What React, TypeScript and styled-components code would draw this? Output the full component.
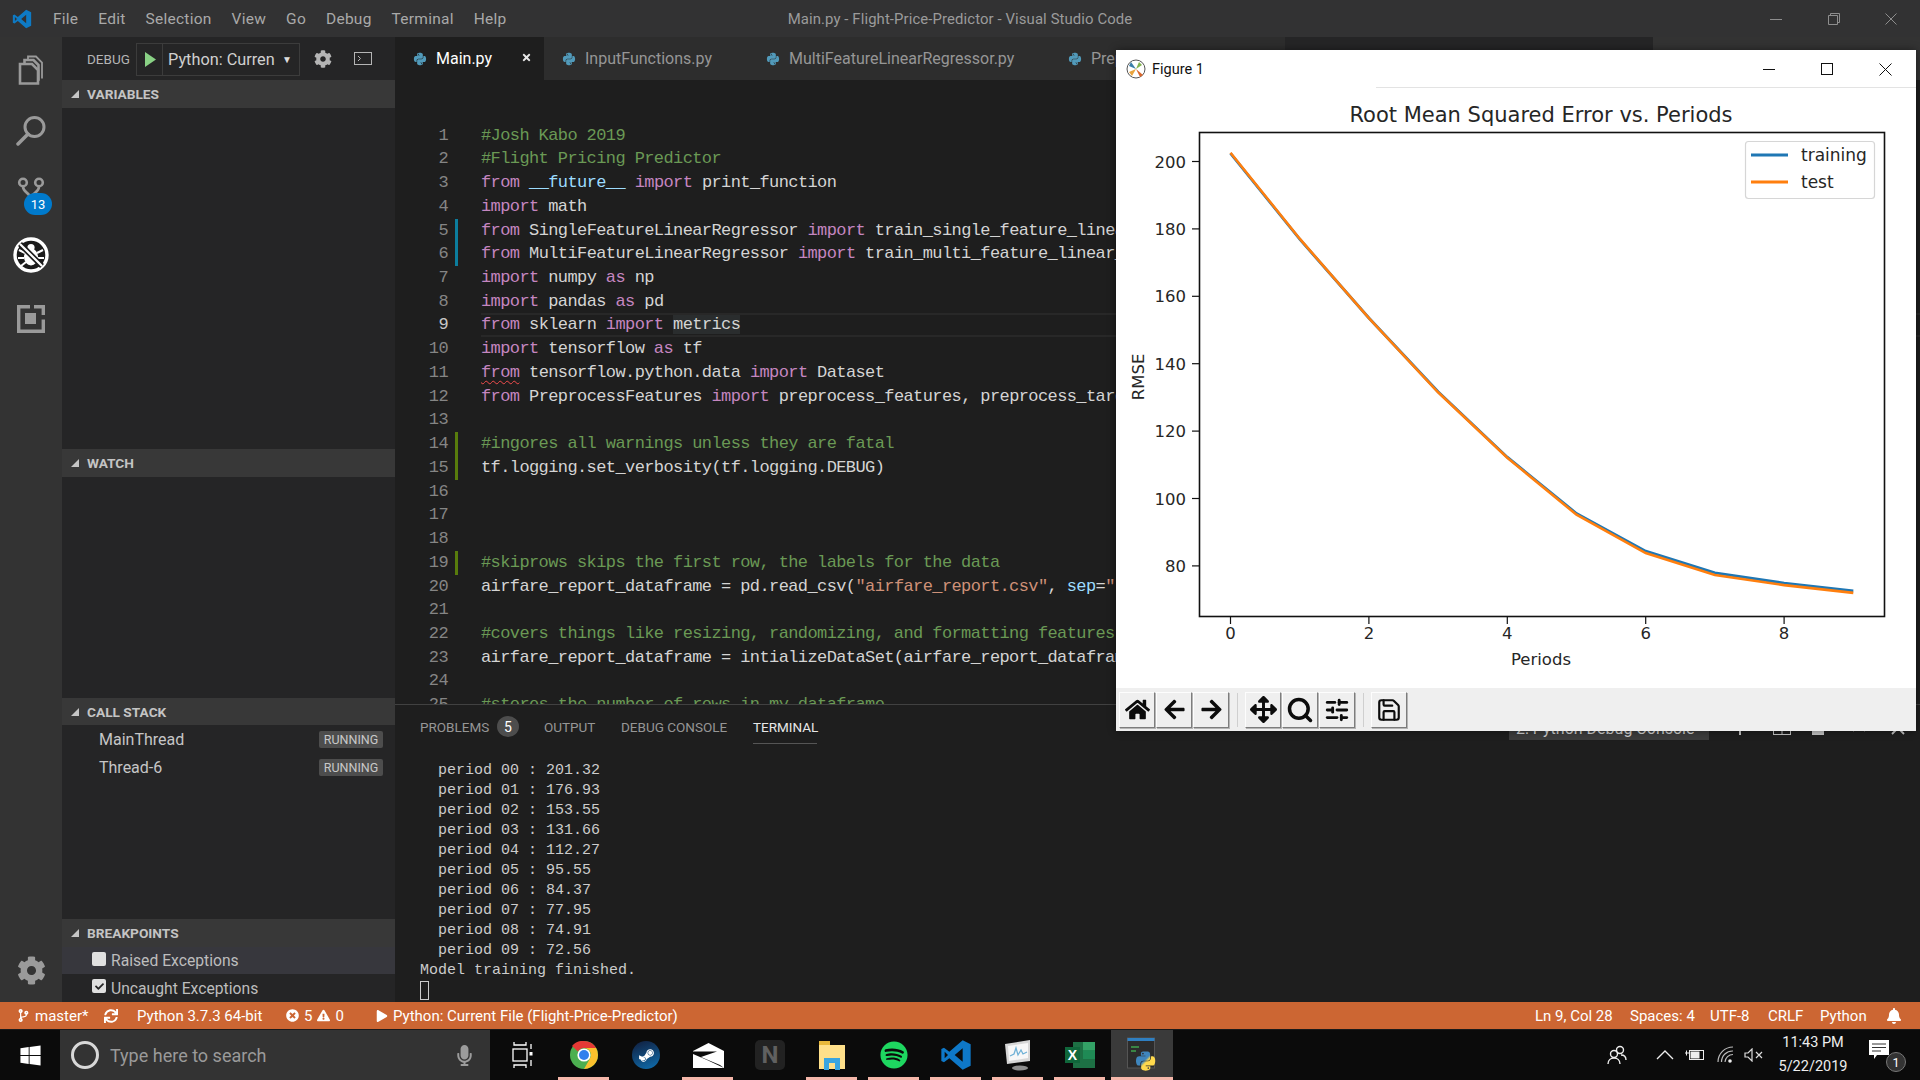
import React from 'react';
import styled, { createGlobalStyle } from 'styled-components';
import { FaCog, FaBell, FaSync, FaHome, FaArrowLeft, FaArrowRight, FaArrowsAlt, FaPython, FaSpotify, FaSteamSymbol, FaWindows, FaCheck, FaTimes, FaTimesCircle, FaExclamationTriangle, FaPlay, FaCodeBranch, FaMicrophone } from 'react-icons/fa';
import { Search as LSearch, SlidersHorizontal, Save } from 'lucide-react';

const UI = `Roboto, "Noto Sans", "Liberation Sans", sans-serif`;
const MONO = `"Liberation Mono", "DejaVu Sans Mono", monospace`;
const CHART = `"DejaVu Sans", sans-serif`;

const Global = createGlobalStyle`
  html, body { margin: 0; padding: 0; background: #1e1e1e; }
  * { box-sizing: border-box; }
`;

const Page = styled.div`
  position: relative; width: 1920px; height: 1080px; overflow: hidden;
  display: flex; flex-direction: column; background: #1e1e1e; font-family: ${UI};
`;
const TitleBar = styled.div`
  height: 37px; flex: none; background: #323233; display: grid; grid-template-columns: 1fr auto 1fr; align-items: center;
`;
const MenuGroup = styled.div`display: flex; align-items: center; padding-left: 12px; gap: 20px;`;
const LogoSlot = styled.div`width: 21px; height: 20px; display: flex; color: #0e7ac4;`;
const MenuItem = styled.span`font-size: 15.5px; letter-spacing: 0.25px; color: #a9a9a9;`;
const WindowTitle = styled.div`font-size: 14.9px; color: #9b9b9b; letter-spacing: 0.1px;`;
const WindowButtons = styled.div`display: flex; justify-content: flex-end;`;
const WindowButton = styled.div`width: 57.5px; height: 37px; display: flex; align-items: center; justify-content: center; color: #8e8e8e;`;

const Main = styled.div`flex: 1; display: flex; min-height: 0;`;
const ActivityBar = styled.div`width: 62px; flex: none; background: #333; display: flex; flex-direction: column; align-items: center; padding-top: 18px;`;
const ActivityIcon = styled.div<{ $h: number }>`position: relative; height: ${p => p.$h}px; width: 62px; display: flex; justify-content: center; color: #9a9a9a;`;
const ActivitySpacer = styled.div`flex: 1;`;
const ActivityGear = styled.div`color: #9a9a9a; font-size: 29px; height: 46px; display: flex;`;
const CountBadge = styled.span`
  position: absolute; left: 24px; top: 16px; width: 28px; height: 22px; border-radius: 11px; background: #007acc; color: #fff;
  font-size: 13px; display: flex; align-items: center; justify-content: center;
`;

const Sidebar = styled.div`width: 333px; flex: none; background: #252526; display: flex; flex-direction: column;`;
const DebugBar = styled.div`height: 43px; flex: none; display: flex; align-items: center; padding-left: 25px; position: relative;`;
const DebugLabel = styled.span`font-size: 13.5px; color: #b4b4b4; width: 49px;`;
const DebugSelect = styled.div`width: 164px; height: 33px; border: 1px solid #3c3c3c; display: flex; align-items: center; color: #d0d0d0; font-size: 16.3px; margin-top: 1px;`;
const PlaySlot = styled.div`width: 26px; height: 100%; border-right: 1px solid #3c3c3c; display: flex; align-items: center; padding-left: 8px; color: #89d185;`;
const SelectText = styled.span`padding-left: 5px; width: 118px; white-space: nowrap; overflow: hidden;`;
const Caret = styled.span`font-size: 10px; color: #ddd; padding-left: 1px;`;
const DebugTool = styled.div<{ $ml: number }>`margin-left: ${p => p.$ml}px; color: #b5b5b5; display: flex;`;
const SectionHeader = styled.div<{ $h?: number }>`
  height: ${p => p.$h ?? 28}px; flex: none; background: #383838; color: #c4c4c4; font-size: 13.7px; font-weight: 700;
  display: flex; align-items: center; padding-left: 9px; gap: 8px;
`;
const Triangle = styled.span`width: 0; height: 0; border-left: 8px solid transparent; border-bottom: 8px solid #c5c5c5;`;
const SectionBody = styled.div<{ $h: number }>`height: ${p => p.$h}px; flex: none;`;
const ThreadRow = styled.div`height: 28px; display: flex; align-items: center; justify-content: space-between; padding: 0 12px 0 37px; color: #c6c6c6; font-size: 16px;`;
const StateBadge = styled.span`background: #4d4d4d; color: #c8c8c8; font-size: 12.5px; height: 17px; width: 64px; display: flex; align-items: center; justify-content: center; border-radius: 2px;`;
const BreakRow = styled.div<{ $active?: boolean }>`height: ${p => (p.$active ? 27 : 28)}px; display: flex; align-items: center; padding-left: 30px; gap: 5px; color: #bdbdbd; font-size: 15.7px; background: ${p => (p.$active ? '#37373d' : 'transparent')};`;
const CheckBox = styled.span`width: 14px; height: 14px; background: #e0e0e0; border-radius: 2px; color: #252526; font-size: 9px; display: flex; align-items: center; justify-content: center; margin-top: -4px;`;

const Workbench = styled.div`flex: 1; min-width: 0; display: flex; flex-direction: column;`;
const TabStrip = styled.div`height: 43px; flex: none; background: #252526; display: flex;`;
const Tab = styled.div<{ $w: number; $active?: boolean }>`
  width: ${p => p.$w}px; flex: none; background: ${p => (p.$active ? '#1e1e1e' : '#2d2d2d')}; color: ${p => (p.$active ? '#fff' : '#969696')};
  font-size: 16px; display: flex; align-items: center; padding-left: 18px; gap: 9px; white-space: nowrap; overflow: hidden; position: relative;
`;
const TabIcon = styled.span`color: #519aba; font-size: 14px; display: flex;`;
const TabClose = styled.span`position: absolute; right: 12px; top: 15px; color: #e8e8e8; font-size: 11px; display: flex;`;
const TabFill = styled.div`width: 368px; flex: none;`;
const TabActions = styled.div`flex: 1; background: #333;`;

const Editor = styled.div`height: 624px; flex: none; background: #1e1e1e; padding-top: 43.6px; overflow: hidden; font-family: ${MONO}; font-size: 17px; letter-spacing: -0.6px;`;
const CodeRow = styled.div`height: 23.74px; display: flex; align-items: stretch; white-space: pre; line-height: 23.74px;`;
const LineNo = styled.span<{ $cur?: boolean }>`width: 53px; flex: none; text-align: right; color: ${p => (p.$cur ? '#c6c6c6' : '#858585')};`;
const Marker = styled.span<{ $c?: string }>`width: 3.5px; margin-left: 6.5px; flex: none; background: ${p => p.$c ?? 'transparent'};`;
const CodeText = styled.span<{ $cur?: boolean }>`
  margin-left: 23px; flex: 1; color: #d4d4d4; box-shadow: ${p => (p.$cur ? 'inset 0 2px 0 #282828, inset 0 -2px 0 #282828' : 'none')};
`;
const Kw = styled.span`color: #c586c0;`;
const Cm = styled.span`color: #6a9955;`;
const St = styled.span`color: #ce9178;`;
const Bl = styled.span`color: #9cdcfe;`;
const Sel = styled.span`background: #2a2d2e;`;
const Squig = styled.span`color: #c586c0; text-decoration: underline wavy #f14c4c 1px; text-underline-offset: 3px;`;

const Panel = styled.div`flex: 1; min-height: 0; border-top: 1px solid #414141; background: #1e1e1e; overflow: hidden;`;
const PanelTabs = styled.div`height: 45px; display: flex; align-items: center; padding: 0 0 2px 25px; position: relative;`;
const PanelTab = styled.span<{ $w: number; $on?: boolean }>`
  width: ${p => p.$w}px; flex: none; font-size: 13.5px; color: ${p => (p.$on ? '#e7e7e7' : '#969696')}; position: relative; white-space: nowrap;
  ${p => (p.$on ? `&::after { content: ''; position: absolute; left: 0; right: 0; bottom: -9px; height: 1px; background: #555; }` : '')}
`;
const ProblemCount = styled.span`width: 22px; height: 21px; border-radius: 50%; background: #4d4d4d; color: #fff; font-size: 14px; display: flex; align-items: center; justify-content: center; margin: 0 25px 0 9px;`;
const ConsolePick = styled.div`margin-left: auto; margin-top: 4px; width: 200px; height: 23px; background: #3c3c3c; color: #d0d0d0; font-size: 16px; padding-left: 7px; display: flex; align-items: center; white-space: nowrap; overflow: hidden;`;
const PanelActions = styled.div`width: 211px; flex: none; display: flex; align-items: center; margin-top: 2px; padding-left: 24px; color: #c5c5c5;`;
const PanelAction = styled.span`width: 39.5px; flex: none; display: flex;`;
const Terminal = styled.div`padding: 10.5px 0 0 25px; font-family: ${MONO}; font-size: 15px; line-height: 20px; color: #cccccc; white-space: pre;`;
const TermCursor = styled.div`width: 9px; height: 19px; border: 1px solid #ccc;`;

const StatusBar = styled.div`height: 27px; flex: none; background: #cc6633; color: #fff; font-size: 15px; display: flex; align-items: center; padding-left: 17px;`;
const StatusItem = styled.div<{ $w?: number }>`${p => (p.$w ? `width: ${p.$w}px; flex: none;` : '')} display: flex; align-items: center; gap: 5px; white-space: nowrap;`;
const StatusSpacer = styled.div`flex: 1;`;

const Taskbar = styled.div`height: 51px; flex: none; border-top: 1px solid #1a1a1a; background: #0b0b0b; display: flex; color: #fff;`;
const StartCell = styled.div`width: 60px; flex: none; display: flex; align-items: center; justify-content: center; font-size: 23px;`;
const SearchBox = styled.div`width: 430px; flex: none; background: #333; display: flex; align-items: center; padding-left: 11px; position: relative;`;
const CortanaRing = styled.span`width: 28px; height: 28px; border-radius: 50%; border: 3.5px solid #d8d8d8; flex: none;`;
const SearchText = styled.span`font-size: 18px; color: #9a9a9a; margin-left: 11px; flex: 1;`;
const MicSlot = styled.span`color: #9c9c9c; font-size: 21px; display: flex; margin-right: 15px;`;
const TaskCell = styled.div<{ $on?: boolean; $active?: boolean; $w?: number }>`
  width: ${p => p.$w ?? 62}px; flex: none; position: relative; display: flex; align-items: center; justify-content: center;
  background: ${p => (p.$active ? '#3a3a3a' : 'transparent')};
  ${p => (p.$on ? `&::after { content: ''; position: absolute; bottom: 0; height: 3px; left: ${p.$active ? 0 : 5}px; right: ${p.$active ? 0 : 6}px; background: #f5b7aa; }` : '')}
`;
const RoundIcon = styled.span<{ $bg: string }>`width: 28px; height: 28px; border-radius: 50%; background: ${p => p.$bg}; display: flex; align-items: center; justify-content: center; color: #fff; font-size: 17px;`;
const SpotifySlot = styled.span`color: #1ed760; font-size: 28px; display: flex;`;
const NTile = styled.span`width: 30px; height: 30px; border-radius: 5px; background: #222; color: #606060; font-size: 24px; font-weight: 700; display: flex; align-items: center; justify-content: center;`;
const TraySpacer = styled.div`flex: 1;`;
const Tray = styled.div`width: 320px; flex: none; display: flex; align-items: center; color: #eee;`;
const TrayIcon = styled.div<{ $w: number; $ml?: number }>`position: relative; width: ${p => p.$w}px; margin-left: ${p => p.$ml ?? 0}px; flex: none; display: flex; align-items: center; justify-content: center;`;
const Clock = styled.div`width: 96px; flex: none; font-size: 14.5px; line-height: 24px; text-align: center; color: #eee;`;
const NotifBadge = styled.span`position: absolute; left: 25px; top: 12px; width: 20px; height: 20px; border-radius: 50%; background: #333; border: 1px solid #777; color: #fff; font-size: 12.5px; display: flex; align-items: center; justify-content: center;`;
const NotifSlot = styled.div`position: relative; width: 59px; height: 30px; padding: 0 0 0 8px; flex: none;`;

const FigureWindow = styled.div`
  position: absolute; left: 1116px; top: 50px; width: 800px; height: 681px; background: #fff;
  box-shadow: 0 0 8px rgba(0,0,0,.45); display: flex; flex-direction: column;
`;
const FigureTitle = styled.div`height: 38px; flex: none; display: flex; align-items: center; padding-left: 10px; position: relative; color: #111; font-size: 14.5px; gap: 6px;`;
const FigureRule = styled.div`position: absolute; left: 260px; right: 0; bottom: 0; height: 1px; background: #e3e3e3;`;
const FigureButtons = styled.div`margin-left: auto; display: flex; padding-right: 1px;`;
const FigureButton = styled.div`width: 58.5px; display: flex; align-items: center; justify-content: center; color: #111;`;
const ChartSlot = styled.div`height: 600px; flex: none; padding-left: 1px;`;
const MplBar = styled.div`flex: 1; background: #efefef; display: flex; align-items: center; padding-left: 3px; gap: 1px;`;
const MplButton = styled.div`
  width: 36px; height: 36px; flex: none; display: flex; align-items: center; justify-content: center; color: #0c0c0c; font-size: 25px;
  border: 1px solid; border-color: #fdfdfd #7d7d7d #7d7d7d #fdfdfd; box-shadow: 1px 1px 0 #b5b5b5; background: #efefef;
`;
const MplSep = styled.div`width: 1px; height: 34px; background: #cfcfcf; margin: 0 6.5px; flex: none;`;

const VsLogo = ({ s = 20 }: { s?: number }) => (
  <svg width={s} height={s} viewBox="0 0 24 24" fill="currentColor">
    <path fillRule="evenodd" d="M17 1 L23 4 V20 L17 23 L7 14.5 L3 17.5 L1 16.5 V7.5 L3 6.5 L7 9.5 Z M17 7 L11 12 L17 17 Z M3.5 9.5 V14.5 L6 12 Z" />
  </svg>
);

const GX = (p: number) => 113.5 + 69.2 * p;
const GY = (v: number) => 73.5 + (200 - v) * 3.37;
const train = [202.4, 176.93, 153.55, 131.66, 112.27, 95.55, 84.37, 77.95, 74.91, 72.56];
const test = [202.6, 177.1, 153.5, 131.5, 112.1, 95.2, 83.8, 77.3, 74.3, 72.0];
const pts = (a: number[]) => a.map((v, i) => `${GX(i).toFixed(1)},${GY(v).toFixed(1)}`).join(' ');

const Chart = () => (
  <svg width="799" height="600" viewBox="0 0 799 600" fontFamily={CHART} fill="#262626">
    <text x="424" y="34" fontSize="21" textAnchor="middle">Root Mean Squared Error vs. Periods</text>
    <rect x="82.5" y="44.5" width="685" height="484" fill="#fff" stroke="#111" strokeWidth="1.6" />
    {[200, 180, 160, 140, 120, 100, 80].map(v => (
      <g key={v}>
        <line x1="75" x2="82" y1={GY(v)} y2={GY(v)} stroke="#111" strokeWidth="1.2" />
        <text x="69" y={GY(v) + 6} fontSize="16.5" textAnchor="end">{v}</text>
      </g>
    ))}
    {[0, 2, 4, 6, 8].map(p => (
      <g key={p}>
        <line x1={GX(p)} x2={GX(p)} y1="529" y2="536" stroke="#111" strokeWidth="1.2" />
        <text x={GX(p)} y="551" fontSize="16.5" textAnchor="middle">{p}</text>
      </g>
    ))}
    <text x="424" y="577" fontSize="16.5" textAnchor="middle">Periods</text>
    <text transform="translate(27 289) rotate(-90)" fontSize="16.5" textAnchor="middle">RMSE</text>
    <polyline points={pts(train)} fill="none" stroke="#1f77b4" strokeWidth="2.8" />
    <polyline points={pts(test)} fill="none" stroke="#ff7f0e" strokeWidth="2.6" />
    <rect x="628.5" y="53.5" width="129" height="57" rx="3" fill="#fff" stroke="#d6d6d6" strokeWidth="1.2" />
    <line x1="634" x2="671" y1="67" y2="67" stroke="#1f77b4" strokeWidth="2.8" />
    <line x1="634" x2="671" y1="94" y2="94" stroke="#ff7f0e" strokeWidth="2.8" />
    <text x="684" y="73" fontSize="17">training</text>
    <text x="684" y="100" fontSize="17">test</text>
  </svg>
);

const MplIcon = () => (
  <svg width="20" height="20" viewBox="0 0 20 20">
    <circle cx="10" cy="10" r="9" fill="#fff" stroke="#555" strokeWidth="1" />
    <path d="M10 10 L5 3 L3 7 Z" fill="#3b7ea8" />
    <path d="M10 10 L3 13 L6 17 Z" fill="#e8a33d" />
    <path d="M10 10 L17 16 L14 18 Z" fill="#d9662b" />
    <path d="M10 10 L13 3 L16 6 Z" fill="#82b34f" />
  </svg>
);

type T = { k?: 'k' | 'c' | 's' | 'b' | 'sel' | 'sq'; t: string };
const kw = (t: string): T => ({ k: 'k', t });
const tx = (t: string): T => ({ t });
const cm = (t: string): T => ({ k: 'c', t });
const lines: { toks: T[]; mark?: string }[] = [
  { toks: [cm('#Josh Kabo 2019')] },
  { toks: [cm('#Flight Pricing Predictor')] },
  { toks: [kw('from'), tx(' '), { k: 'b', t: '__future__' }, tx(' '), kw('import'), tx(' print_function')] },
  { toks: [kw('import'), tx(' math')] },
  { mark: '#0c7d9d', toks: [kw('from'), tx(' SingleFeatureLinearRegressor '), kw('import'), tx(' train_single_feature_linear_regressor')] },
  { mark: '#0c7d9d', toks: [kw('from'), tx(' MultiFeatureLinearRegressor '), kw('import'), tx(' train_multi_feature_linear_regressor')] },
  { toks: [kw('import'), tx(' numpy '), kw('as'), tx(' np')] },
  { toks: [kw('import'), tx(' pandas '), kw('as'), tx(' pd')] },
  { toks: [kw('from'), tx(' sklearn '), kw('import'), tx(' '), { k: 'sel', t: 'metrics' }] },
  { toks: [kw('import'), tx(' tensorflow '), kw('as'), tx(' tf')] },
  { toks: [{ k: 'sq', t: 'from' }, tx(' tensorflow.python.data '), kw('import'), tx(' Dataset')] },
  { toks: [kw('from'), tx(' PreprocessFeatures '), kw('import'), tx(' preprocess_features, preprocess_targets')] },
  { toks: [] },
  { mark: '#587c0c', toks: [cm('#ingores all warnings unless they are fatal')] },
  { mark: '#587c0c', toks: [tx('tf.logging.set_verbosity(tf.logging.DEBUG)')] },
  { toks: [] },
  { toks: [] },
  { toks: [] },
  { mark: '#587c0c', toks: [cm('#skiprows skips the first row, the labels for the data')] },
  { toks: [tx('airfare_report_dataframe = pd.read_csv('), { k: 's', t: '"airfare_report.csv"' }, tx(', '), { k: 'b', t: 'sep' }, tx('='), { k: 's', t: '","' }, tx(')')] },
  { toks: [] },
  { toks: [cm('#covers things like resizing, randomizing, and formatting features')] },
  { toks: [tx('airfare_report_dataframe = intializeDataSet(airfare_report_dataframe)')] },
  { toks: [] },
  { toks: [cm('#stores the number of rows in my dataframe')] },
];
const Tok = ({ k, t }: T) => {
  if (k === 'k') return <Kw>{t}</Kw>;
  if (k === 'c') return <Cm>{t}</Cm>;
  if (k === 's') return <St>{t}</St>;
  if (k === 'b') return <Bl>{t}</Bl>;
  if (k === 'sel') return <Sel>{t}</Sel>;
  if (k === 'sq') return <Squig>{t}</Squig>;
  return <>{t}</>;
};

const periods = ['201.32', '176.93', '153.55', '131.66', '112.27', '95.55', '84.37', '77.95', '74.91', '72.56'];

const Chrome = () => (
  <svg width="28" height="28" viewBox="0 0 28 28">
    <circle cx="14" cy="14" r="14" fill="#4caf50" />
    <path d="M14 0 A14 14 0 0 1 26.1 7 L14 7 A7 7 0 0 0 7.9 10.5 L2 4.9 A14 14 0 0 1 14 0Z" fill="#e53935" />
    <path d="M26.1 7 A14 14 0 0 1 14 28 L20 17.5 A7 7 0 0 0 14 7Z" fill="#fbc02d" />
    <circle cx="14" cy="14" r="6.6" fill="#fff" />
    <circle cx="14" cy="14" r="5" fill="#2f80ed" />
  </svg>
);
const Mail = () => (
  <svg width="31" height="25" viewBox="0 0 31 25">
    <path d="M0 8 L15.5 0 L31 8 V25 H0Z" fill="#fff" />
    <path d="M0 8.5 L24 8.5 L8 14 L27 22 L31 25 L14 17 L0 11Z" fill="#0b0b0b" />
  </svg>
);
const Folder = () => (
  <svg width="28" height="32" viewBox="0 0 28 32">
    <path d="M1 3 H10 L12 6 H27 V30 H1Z" fill="#ffe08a" />
    <rect x="1" y="2" width="11" height="4" fill="#e8b93c" />
    <path d="M6 19 H22 V31 H17 V24 H11 V31 H6Z" fill="#3aa5e0" />
  </svg>
);
const Monitor = () => (
  <svg width="30" height="32" viewBox="0 0 30 32">
    <path d="M2 5 L27 1 V22 L4 25Z" fill="#d7d7d7" />
    <path d="M5 7 L25 4 V19 L6 22Z" fill="#f7f7f7" />
    <path d="M7 17 L11 15 L13 9 L15 16 L18 11 L20 15 L24 13" fill="none" stroke="#6fb1d6" strokeWidth="1.3" />
    <ellipse cx="17" cy="29" rx="8" ry="2.5" fill="#8e8e8e" />
  </svg>
);
const Excel = () => (
  <svg width="30" height="28" viewBox="0 0 30 28" fontFamily="Liberation Sans, sans-serif">
    <rect x="8" y="1" width="22" height="26" fill="#1d7044" />
    <rect x="18" y="1" width="12" height="8.5" fill="#33a266" />
    <rect x="18" y="9.5" width="12" height="8.5" fill="#1f8a55" />
    <rect x="0" y="6" width="15" height="16" fill="#10673b" />
    <text x="7.5" y="19" fontSize="14" fontWeight="700" fill="#fff" textAnchor="middle">X</text>
  </svg>
);
const PythonApp = () => (
  <svg width="30" height="36" viewBox="0 0 30 36">
    <defs>
      <linearGradient id="pyg" x1="0" y1="0" x2="1" y2="1">
        <stop offset="0.45" stopColor="#3f86bd" />
        <stop offset="0.55" stopColor="#ffd94c" />
      </linearGradient>
    </defs>
    <rect x="0.5" y="1" width="27" height="30" fill="#2c2c2c" stroke="#555" />
    <rect x="0.5" y="1" width="27" height="3" fill="#2f7fc1" />
    <path d="M4 10h8M4 14h5" stroke="#3fa34d" strokeWidth="1.5" />
    <g transform="translate(9 13) scale(0.043)">
      <path fill="url(#pyg)" d="M439.8 200.5c-7.7-30.9-22.3-54.2-53.4-54.2h-40.1v47.4c0 36.8-31.2 67.8-66.8 67.8H172.7c-29.2 0-53.4 25-53.4 54.3v101.8c0 29 25.2 46 53.4 54.3 33.8 9.9 66.3 11.7 106.8 0 26.9-7.8 53.4-23.5 53.4-54.3v-40.7H226.2v-13.6h160.2c31.1 0 42.6-21.7 53.4-54.2 11.2-33.5 10.7-65.7 0-108.6zM286.2 404c11.1 0 20.1 9.1 20.1 20.3 0 11.3-9 20.4-20.1 20.4-11 0-20.1-9.2-20.1-20.4.1-11.3 9.1-20.3 20.1-20.3zM167.8 248.1h106.8c29.7 0 53.4-24.5 53.4-54.3V91.9c0-29-24.4-50.7-53.4-55.6-35.8-5.9-74.7-5.6-106.8.1-45.2 8-53.4 24.7-53.4 55.6v40.7h106.9v13.6h-147c-31.1 0-58.3 18.7-66.8 54.2-9.8 40.7-10.2 66.1 0 108.6 7.6 31.6 25.7 54.2 56.8 54.2H101v-48.8c0-35.3 30.5-66.4 66.8-66.4zm-6.7-142.6c-11.1 0-20.1-9.1-20.1-20.3.1-11.3 9-20.4 20.1-20.4 11 0 20.1 9.2 20.1 20.4s-9 20.3-20.1 20.3z" />
    </g>
  </svg>
);

const SourceControl = () => (
  <svg width="28" height="24" viewBox="0 0 28 24" fill="none" stroke="currentColor" strokeWidth="2.6">
    <circle cx="6" cy="5.5" r="3.8" />
    <circle cx="22" cy="5.5" r="3.8" />
    <path d="M6 9.5 C6 16 13 15 14 22 C15 15 22 16 22 9.5" />
  </svg>
);

export default function App() {
  return (
    <Page>
      <Global />
      <TitleBar>
        <MenuGroup>
          <LogoSlot><VsLogo /></LogoSlot>
          {['File', 'Edit', 'Selection', 'View', 'Go', 'Debug', 'Terminal', 'Help'].map(m => <MenuItem key={m}>{m}</MenuItem>)}
        </MenuGroup>
        <WindowTitle>Main.py - Flight-Price-Predictor - Visual Studio Code</WindowTitle>
        <WindowButtons>
          <WindowButton><svg width="12" height="12" viewBox="0 0 12 12"><path d="M0 6.5h12" stroke="currentColor" /></svg></WindowButton>
          <WindowButton><svg width="12" height="12" viewBox="0 0 12 12" fill="none" stroke="currentColor"><path d="M.5 2.5h9v9h-9zM2.5 2.5v-2h9v9h-2" /></svg></WindowButton>
          <WindowButton><svg width="12" height="12" viewBox="0 0 12 12" stroke="currentColor"><path d="M.5.5l11 11M11.5.5l-11 11" /></svg></WindowButton>
        </WindowButtons>
      </TitleBar>

      <Main>
        <ActivityBar>
          <ActivityIcon $h={61}>
            <svg width="26" height="30" viewBox="0 0 26 30" fill="none" stroke="currentColor" strokeWidth="2.6"><path d="M2 9h12l6 6v13.5H2z" /><path d="M6.5 9V5h9l5 5v14.5h-1" /><path d="M10 5V1.5h8l6 6v16" strokeWidth="1.8" /></svg>
          </ActivityIcon>
          <ActivityIcon $h={61}>
            <svg width="30" height="30" viewBox="0 0 30 30" fill="none" stroke="currentColor" strokeWidth="3"><circle cx="18.5" cy="11" r="9.5" /><path d="M12 18L2 28" strokeLinecap="round" strokeWidth="3.5" /></svg>
          </ActivityIcon>
          <ActivityIcon $h={60}>
            <SourceControl />
            <CountBadge>13</CountBadge>
          </ActivityIcon>
          <ActivityIcon $h={68}>
            <svg width="36" height="36" viewBox="0 0 36 36" style={{ color: '#fff' }}>
              <circle cx="18" cy="18" r="16" fill="#1b1b1b" stroke="#fff" strokeWidth="3.4" />
              <ellipse cx="18" cy="20" rx="7" ry="8.5" fill="#fff" />
              <circle cx="18" cy="10.5" r="3.6" fill="#fff" />
              <path d="M6 13l6 3M30 13l-6 3M5 21h6M31 21h-6M8 29l5-4M28 29l-5-4" stroke="#fff" strokeWidth="2" />
              <path d="M7 7l22 22" stroke="#1b1b1b" strokeWidth="5.5" />
              <path d="M7 7l22 22" stroke="#fff" strokeWidth="2.2" />
            </svg>
          </ActivityIcon>
          <ActivityIcon $h={40}>
            <svg width="28" height="28" viewBox="0 0 28 28" fill="none" stroke="currentColor" strokeWidth="3.4"><path d="M13 1.7H1.7V26.3H26.3V14.5" /><path d="M17 1.7h9.3V10" /><rect x="8" y="8" width="11" height="11" fill="currentColor" stroke="none" /></svg>
          </ActivityIcon>
          <ActivitySpacer />
          <ActivityGear><FaCog /></ActivityGear>
        </ActivityBar>

        <Sidebar>
          <DebugBar>
            <DebugLabel>DEBUG</DebugLabel>
            <DebugSelect>
              <PlaySlot><svg width="11" height="15" viewBox="0 0 11 15"><path d="M0 0l11 7.5L0 15z" fill="currentColor" /></svg></PlaySlot>
              <SelectText>Python: Curren</SelectText>
              <Caret>▼</Caret>
            </DebugSelect>
            <DebugTool $ml={14}><FaCog size={18} /></DebugTool>
            <DebugTool $ml={22}>
              <svg width="18" height="13" viewBox="0 0 18 13" fill="none" stroke="currentColor"><rect x=".5" y=".5" width="17" height="12" /><path d="M4 4l2.5 2.5L4 9" /></svg>
            </DebugTool>
          </DebugBar>
          <SectionHeader><Triangle />VARIABLES</SectionHeader>
          <SectionBody $h={341} />
          <SectionHeader><Triangle />WATCH</SectionHeader>
          <SectionBody $h={221} />
          <SectionHeader $h={27}><Triangle />CALL STACK</SectionHeader>
          <SectionBody $h={194}>
            <ThreadRow>MainThread<StateBadge>RUNNING</StateBadge></ThreadRow>
            <ThreadRow>Thread-6<StateBadge>RUNNING</StateBadge></ThreadRow>
          </SectionBody>
          <SectionHeader><Triangle />BREAKPOINTS</SectionHeader>
          <BreakRow $active><CheckBox />Raised Exceptions</BreakRow>
          <BreakRow><CheckBox><FaCheck /></CheckBox>Uncaught Exceptions</BreakRow>
        </Sidebar>

        <Workbench>
          <TabStrip>
            <Tab $w={149} $active><TabIcon><FaPython /></TabIcon>Main.py<TabClose><FaTimes /></TabClose></Tab>
            <Tab $w={204}><TabIcon><FaPython /></TabIcon>InputFunctions.py</Tab>
            <Tab $w={302}><TabIcon><FaPython /></TabIcon>MultiFeatureLinearRegressor.py</Tab>
            <Tab $w={235}><TabIcon><FaPython /></TabIcon>PreprocessFeatures.py</Tab>
            <TabFill />
            <TabActions />
          </TabStrip>
          <Editor>
            {lines.map((l, i) => (
              <CodeRow key={i}>
                <LineNo $cur={i === 8}>{i + 1}</LineNo>
                <Marker $c={l.mark} />
                <CodeText $cur={i === 8}>{l.toks.map((t, j) => <Tok key={j} {...t} />)}</CodeText>
              </CodeRow>
            ))}
          </Editor>
          <Panel>
            <PanelTabs>
              <PanelTab $w={68}>PROBLEMS</PanelTab>
              <ProblemCount>5</ProblemCount>
              <PanelTab $w={77}>OUTPUT</PanelTab>
              <PanelTab $w={132}>DEBUG CONSOLE</PanelTab>
              <PanelTab $w={64} $on>TERMINAL</PanelTab>
              <ConsolePick>2: Python Debug Console</ConsolePick>
              <PanelActions>
                <PanelAction><svg width="14" height="14" viewBox="0 0 14 14" stroke="currentColor" strokeWidth="2"><path d="M7 0v14M0 7h14" /></svg></PanelAction>
                <PanelAction><svg width="18" height="14" viewBox="0 0 18 14" fill="none" stroke="currentColor"><rect x=".5" y=".5" width="17" height="13" /><path d="M9 .5v13" /></svg></PanelAction>
                <PanelAction><svg width="12" height="14" viewBox="0 0 12 14" fill="currentColor"><rect x="0" y="1" width="12" height="13" /></svg></PanelAction>
                <PanelAction><svg width="14" height="14" viewBox="0 0 14 14" fill="none" stroke="currentColor" strokeWidth="1.6"><path d="M1 10l6-6 6 6" /></svg></PanelAction>
                <PanelAction><svg width="14" height="14" viewBox="0 0 14 14" stroke="currentColor" strokeWidth="1.8"><path d="M1 1l12 12M13 1L1 13" /></svg></PanelAction>
              </PanelActions>
            </PanelTabs>
            <Terminal>
              {periods.map((v, i) => <div key={i}>{`  period 0${i} : ${v}`}</div>)}
              <div>Model training finished.</div>
              <TermCursor />
            </Terminal>
          </Panel>
        </Workbench>
      </Main>

      <StatusBar>
        <StatusItem $w={87}><FaCodeBranch size={13} />master*</StatusItem>
        <StatusItem $w={33}><FaSync size={14} /></StatusItem>
        <StatusItem $w={149}>Python 3.7.3 64-bit</StatusItem>
        <StatusItem $w={90}><FaTimesCircle size={13} />5 <FaExclamationTriangle size={13} />0</StatusItem>
        <StatusItem><FaPlay size={12} />Python: Current File (Flight-Price-Predictor)</StatusItem>
        <StatusSpacer />
        <StatusItem $w={95}>Ln 9, Col 28</StatusItem>
        <StatusItem $w={80}>Spaces: 4</StatusItem>
        <StatusItem $w={58}>UTF-8</StatusItem>
        <StatusItem $w={52}>CRLF</StatusItem>
        <StatusItem $w={66}>Python</StatusItem>
        <StatusItem $w={34}><FaBell size={16} /></StatusItem>
      </StatusBar>

      <Taskbar>
        <StartCell><FaWindows /></StartCell>
        <SearchBox>
          <CortanaRing />
          <SearchText>Type here to search</SearchText>
          <MicSlot><FaMicrophone /></MicSlot>
        </SearchBox>
        <TaskCell $w={63}>
          <svg width="22" height="28" viewBox="0 0 22 28" fill="none" stroke="#fff" strokeWidth="1.3"><path d="M3 1v3h12V1M3 27v-3h12v3" /><rect x="2" y="8" width="14" height="12" /><path d="M20 3v5M20 19v6" /><rect x="18.5" y="11" width="3" height="3.5" fill="#fff" stroke="none" /></svg>
        </TaskCell>
        <TaskCell $on><Chrome /></TaskCell>
        <TaskCell><RoundIcon $bg="linear-gradient(160deg,#111d3c,#0f6fb0)"><FaSteamSymbol /></RoundIcon></TaskCell>
        <TaskCell $on><Mail /></TaskCell>
        <TaskCell><NTile>N</NTile></TaskCell>
        <TaskCell $on><Folder /></TaskCell>
        <TaskCell $on><SpotifySlot><FaSpotify /></SpotifySlot></TaskCell>
        <TaskCell $on><span style={{ color: '#0e78c8', display: 'flex' }}><VsLogo s={32} /></span></TaskCell>
        <TaskCell $on><Monitor /></TaskCell>
        <TaskCell $on><Excel /></TaskCell>
        <TaskCell $on $active><PythonApp /></TaskCell>
        <TraySpacer />
        <Tray>
          <TrayIcon $w={34}>
            <svg width="20" height="20" viewBox="0 0 20 20" fill="none" stroke="#eee" strokeWidth="1.4"><circle cx="13" cy="5" r="3.5" /><circle cx="7" cy="9" r="3.5" /><path d="M1 19c0-4 3-6 6-6s6 2 6 6M14 10c3 0 5 2 5 5" /></svg>
          </TrayIcon>
          <TrayIcon $w={32} $ml={15}>
            <svg width="18" height="10" viewBox="0 0 18 10" fill="none" stroke="#eee" strokeWidth="1.3"><path d="M1 9l8-8 8 8" /></svg>
          </TrayIcon>
          <TrayIcon $w={28}>
            <svg width="20" height="14" viewBox="0 0 20 14" fill="none" stroke="#eee"><rect x="4.5" y="2.5" width="14" height="9" /><rect x="5.5" y="3.5" width="9" height="7" fill="#eee" stroke="none" /><path d="M0 5h4M1.5 2.5v5" /></svg>
          </TrayIcon>
          <TrayIcon $w={34}>
            <svg width="18" height="18" viewBox="0 0 18 18" fill="none" stroke="#bbb" strokeWidth="1.2"><path d="M1 16A15 15 0 0 1 16 1M4.5 16A11 11 0 0 1 16 5M8 16A8 8 0 0 1 16 8.5" /><circle cx="13" cy="15" r="1.8" fill="#eee" stroke="none" /></svg>
          </TrayIcon>
          <TrayIcon $w={22}>
            <svg width="20" height="14" viewBox="0 0 20 14" fill="none" stroke="#ddd" strokeWidth="1.2"><path d="M1 5h3l4-4v12l-4-4H1z" /><path d="M12 4l6 6M18 4l-6 6" /></svg>
          </TrayIcon>
          <Clock>11:43 PM<br />5/22/2019</Clock>
          <NotifSlot>
            <svg width="20" height="20" viewBox="0 0 20 20"><path d="M0 0h20v15H8l-3 4v-4H0z" fill="#fff" /><path d="M3 4h14M3 7.5h14M3 11h9" stroke="#333" /></svg>
            <NotifBadge>1</NotifBadge>
          </NotifSlot>
        </Tray>
      </Taskbar>

      <FigureWindow>
        <FigureTitle>
          <MplIcon />Figure 1
          <FigureButtons>
            <FigureButton><svg width="12" height="12" viewBox="0 0 12 12"><path d="M0 6.5h12" stroke="currentColor" /></svg></FigureButton>
            <FigureButton><svg width="12" height="12" viewBox="0 0 12 12" fill="none" stroke="currentColor"><rect x=".5" y=".5" width="11" height="11" /></svg></FigureButton>
            <FigureButton><svg width="13" height="13" viewBox="0 0 13 13" stroke="currentColor"><path d="M.5.5l12 12M12.5.5l-12 12" /></svg></FigureButton>
          </FigureButtons>
          <FigureRule />
        </FigureTitle>
        <ChartSlot><Chart /></ChartSlot>
        <MplBar>
          <MplButton><FaHome /></MplButton>
          <MplButton><FaArrowLeft size={23} /></MplButton>
          <MplButton><FaArrowRight size={23} /></MplButton>
          <MplSep />
          <MplButton><FaArrowsAlt size={27} /></MplButton>
          <MplButton><LSearch size={28} strokeWidth={3} /></MplButton>
          <MplButton><SlidersHorizontal size={26} strokeWidth={2.6} /></MplButton>
          <MplSep />
          <MplButton><Save size={26} strokeWidth={2} /></MplButton>
        </MplBar>
      </FigureWindow>
    </Page>
  );
}
